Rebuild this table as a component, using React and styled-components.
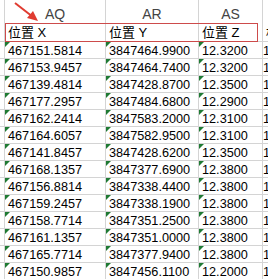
import React from 'react';
import styled, { createGlobalStyle } from 'styled-components';

const GlobalStyle = createGlobalStyle`
  html, body {
    margin: 0;
    padding: 0;
    background: #ffffff;
  }
  body {
    font-family: "Liberation Sans", Arial, sans-serif;
    overflow: hidden;
  }
`;

const Sheet = styled.div`
  position: relative;
  width: 268px;
  height: 279px;
  overflow: hidden;
  background: #ffffff;
`;

const Grid = styled.div`
  display: grid;
  grid-template-columns: 5px 101px 93px 64px 40px;
  grid-auto-rows: 17px;
  grid-template-rows: 25px;
`;

const Cell = styled.div`
  box-sizing: border-box;
  border-right: 1px solid #d4d4d4;
  border-bottom: 1px solid #d4d4d4;
  position: relative;
  overflow: hidden;
  white-space: nowrap;
  font-size: 12.7px;
  line-height: 16px;
  padding-top: 1px;
  color: #000;
  padding-left: ${p => (p.$edge ? '0' : '3px')};

  ${p => p.$flag && `
    &::before {
      content: '';
      position: absolute;
      left: 0;
      top: 0;
      border-top: 5px solid #1f7a33;
      border-right: 5px solid transparent;
    }
  `}
`;

const Letter = styled(Cell)`
  font-size: 14px;
  line-height: 20px;
  padding: 4px 0 0;
  text-align: center;
  color: #444;
  border-bottom: none;
`;

const Label = styled(Cell)`
  font-family: "Liberation Sans", "Noto Sans CJK SC", sans-serif;
  font-size: 13px;
  padding-left: 3px;
  padding-top: 0;
`;

const Box = styled.div`
  position: absolute;
  left: 5px;
  top: 23px;
  width: 253px;
  height: 19px;
  box-sizing: border-box;
  border: 1.5px solid #cd4b4b;
  pointer-events: none;
`;

const Arrow = styled.svg`
  position: absolute;
  left: 0;
  top: 0;
  pointer-events: none;
`;

const rows = [
  ['467151.5814', '3847464.9900', '12.3200'],
  ['467153.9457', '3847464.7400', '12.3200'],
  ['467139.4814', '3847428.8700', '12.3500'],
  ['467177.2957', '3847484.6800', '12.2900'],
  ['467162.2414', '3847583.2000', '12.3100'],
  ['467164.6057', '3847582.9500', '12.3100'],
  ['467141.8457', '3847428.6200', '12.3500'],
  ['467168.1357', '3847377.6900', '12.3800'],
  ['467156.8814', '3847338.4400', '12.3800'],
  ['467159.2457', '3847338.1900', '12.3800'],
  ['467158.7714', '3847351.2500', '12.3800'],
  ['467161.1357', '3847351.0000', '12.3800'],
  ['467165.7714', '3847377.9400', '12.3800'],
  ['467150.9857', '3847456.1100', '12.2000'],
];

const App = () => (
  <Sheet>
    <GlobalStyle />
    <Grid>
      <Letter />
      <Letter>AQ</Letter>
      <Letter>AR</Letter>
      <Letter>AS</Letter>
      <Letter />

      <Cell $edge />
      <Label>位置 X</Label>
      <Label>位置 Y</Label>
      <Label>位置 Z</Label>
      <Label>标高</Label>

      {rows.map(r => (
        <React.Fragment key={r[0]}>
          <Cell $edge />
          <Cell $flag>{r[0]}</Cell>
          <Cell $flag>{r[1]}</Cell>
          <Cell $flag>{r[2]}</Cell>
          <Cell $edge>1</Cell>
        </React.Fragment>
      ))}
    </Grid>
    <Box />
    <Arrow width="50" height="30" viewBox="0 0 50 30">
      <line x1="15" y1="3" x2="33" y2="17" stroke="#e03c31" strokeWidth="2" />
      <polygon points="38,21 27,18 33,11" fill="#e03c31" />
    </Arrow>
  </Sheet>
);

export default App;
